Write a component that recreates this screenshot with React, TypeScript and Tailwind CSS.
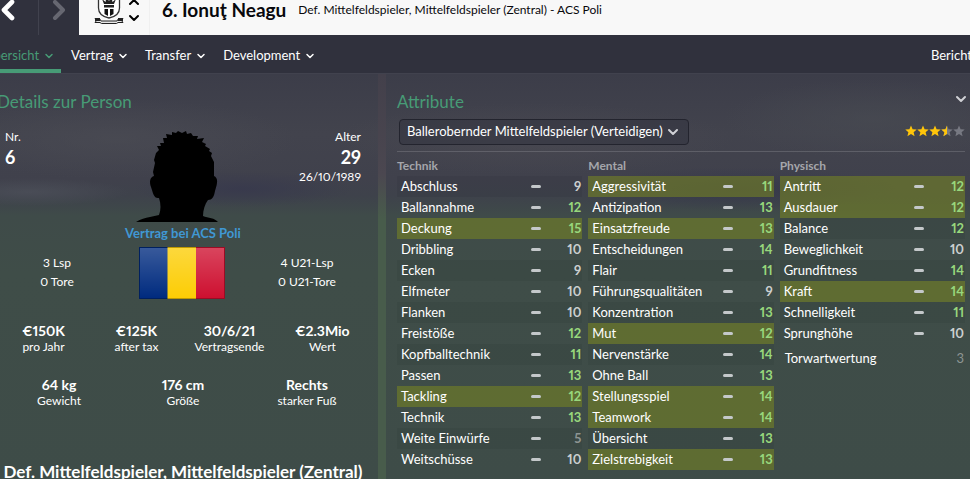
import { ChevronDown, ChevronLeft, ChevronRight, ChevronUp } from 'lucide-react';

interface Attribute {
  name: string;
  value: number;
  key?: boolean;
}

interface AttributeGroup {
  title: string;
  attributes: Attribute[];
}

const groups: AttributeGroup[] = [
  {
    title: 'Technik',
    attributes: [
      { name: 'Abschluss', value: 9 },
      { name: 'Ballannahme', value: 12 },
      { name: 'Deckung', value: 15, key: true },
      { name: 'Dribbling', value: 10 },
      { name: 'Ecken', value: 9 },
      { name: 'Elfmeter', value: 10 },
      { name: 'Flanken', value: 10 },
      { name: 'Freistöße', value: 12 },
      { name: 'Kopfballtechnik', value: 11 },
      { name: 'Passen', value: 13 },
      { name: 'Tackling', value: 12, key: true },
      { name: 'Technik', value: 13 },
      { name: 'Weite Einwürfe', value: 5 },
      { name: 'Weitschüsse', value: 10 },
    ],
  },
  {
    title: 'Mental',
    attributes: [
      { name: 'Aggressivität', value: 11, key: true },
      { name: 'Antizipation', value: 13 },
      { name: 'Einsatzfreude', value: 13, key: true },
      { name: 'Entscheidungen', value: 14 },
      { name: 'Flair', value: 11 },
      { name: 'Führungsqualitäten', value: 9 },
      { name: 'Konzentration', value: 13 },
      { name: 'Mut', value: 12, key: true },
      { name: 'Nervenstärke', value: 14 },
      { name: 'Ohne Ball', value: 13 },
      { name: 'Stellungsspiel', value: 14, key: true },
      { name: 'Teamwork', value: 14, key: true },
      { name: 'Übersicht', value: 13 },
      { name: 'Zielstrebigkeit', value: 13, key: true },
    ],
  },
  {
    title: 'Physisch',
    attributes: [
      { name: 'Antritt', value: 12, key: true },
      { name: 'Ausdauer', value: 12, key: true },
      { name: 'Balance', value: 12 },
      { name: 'Beweglichkeit', value: 10 },
      { name: 'Grundfitness', value: 14 },
      { name: 'Kraft', value: 14, key: true },
      { name: 'Schnelligkeit', value: 11 },
      { name: 'Sprunghöhe', value: 10 },
    ],
  },
];

const contract = [
  { value: '€150K', label: 'pro Jahr' },
  { value: '€125K', label: 'after tax' },
  { value: '30/6/21', label: 'Vertragsende' },
  { value: '€2.3Mio', label: 'Wert' },
];

const body = [
  { value: '64 kg', label: 'Gewicht' },
  { value: '176 cm', label: 'Größe' },
  { value: 'Rechts', label: 'starker Fuß' },
];

const tabs = ['Vertrag', 'Transfer', 'Development'];

function valueColor(value: number) {
  if (value > 10) return 'text-[#98d77c]';
  if (value > 5) return 'text-[#ccd0d0]';
  return 'text-[#8d9593]';
}

function ClubCrest() {
  return (
    <svg width="32" height="40" viewBox="0 0 30 40" fill="none" aria-hidden="true">
      <path d="M4.500 4V24C4.500 30 10 33 15 34C20 33 25.500 30 25.500 24V4Z" fill="#fff" stroke="#333" strokeWidth="1.300" />
      <path d="M8 15L10 20H20L22 15L18.500 18L17.500 13L15 17L12.500 13L11.500 18ZM10 21H20V23.500H10Z" fill="#222" />
      <path d="M10.500 25H14V32L10.500 30ZM16 25H19.500V30L16 32Z" fill="#111" />
      <path d="M1 34.500H5.500L7 37H23L24.500 34.500H29L27.500 36.500L29 38.500H24L22.500 39.500H7.500L6 38.500H1L2.500 36.500Z" fill="#e5e5e5" stroke="#222" />
      <path d="M1 34H6V37H1ZM24 34H29V37H24Z" fill="#222" />
    </svg>
  );
}

function Silhouette() {
  return (
    <svg width="82" height="91" viewBox="0 0 82 91" role="img" aria-label="Ionuţ Neagu">
      <path
        d="M0 91C5 88 9 87 14 86L23 84C25 79 25 73 23 67C18 68 17 62 15 56C13 51 14 46 18 45L17 41L19 32L18 29L20 22L23 19L21 15L25 15L24 12L28 12L27 7L31 7L30 3L36 4L36 1L40 2L42 0L46 2L50 0L51 3L55 2L57 5L62 5L61 8L68 7L66 11L70 13L69 15L74 18L73 20L76 22L75 25L78 31L78 45C82 47 82 51 79 60C78 66 76 69 72 69C69 73 67 79 67 85C72 87 79 87 82 91Z"
        fill="#000"
      />
    </svg>
  );
}

function RomanianFlag() {
  return (
    <svg width="86" height="52" viewBox="0 0 86 52" role="img" aria-label="Rumänien">
      <defs>
        <linearGradient id="gloss" x1="0" y1="0" x2="0" y2="1">
          <stop offset="0" stopColor="#fff" stopOpacity="0.220" />
          <stop offset="1" stopColor="#fff" stopOpacity="0" />
        </linearGradient>
      </defs>
      <path d="M0 0H29V52H0Z" fill="#002b7f" />
      <path d="M28.500 0H57.500V52H28.500Z" fill="#fccd05" />
      <path d="M57 0H86V52H57Z" fill="#ce1030" />
      <path d="M1 1H85V51H1Z" fill="url(#gloss)" />
      <path d="M.5 .5H85.500V51.500H.5Z" fill="none" stroke="#000" strokeOpacity=".25" />
    </svg>
  );
}

function Stars() {
  const star = 'M6 .5L7.600 4.200L11.700 4.500L8.600 7.200L9.600 11.200L6 9L2.400 11.200L3.400 7.200L.3 4.500L4.400 4.200Z';
  return (
    <svg width="60" height="12" viewBox="0 0 60 12" role="img" aria-label="3,5 von 5 Sternen">
      <clipPath id="rating">
        <path d="M0 0H42V12H0Z" />
      </clipPath>
      {[36, 48].map((x) => (
        <path key={x} d={star} transform={`translate(${x} 0)`} fill="#777982" />
      ))}
      <g clipPath="url(#rating)" fill="#ffc50a">
        {[0, 12, 24, 36].map((x) => (
          <path key={x} d={star} transform={`translate(${x} 0)`} />
        ))}
      </g>
    </svg>
  );
}

function Stat({ value, label }: { value: string; label: string }) {
  return (
    <div className="text-center">
      <div className="text-[14px] leading-4 font-bold">{value}</div>
      <div className="text-[12px] leading-4">{label}</div>
    </div>
  );
}

function AttributeTable({ group }: { group: AttributeGroup }) {
  return (
    <table className="w-full table-fixed border-collapse">
      <caption className="h-[21px] text-left text-[12px] leading-[22px] font-bold text-[#a5a6ab]">{group.title}</caption>
      <tbody>
        {group.attributes.map((attribute) => (
          <tr
            key={attribute.name}
            className={`h-[21px] ${attribute.key ? 'bg-[#748225]/60' : 'odd:bg-black/5'}`}
          >
            <th scope="row" className="w-[67%] p-0 pl-1 text-left text-[13px] leading-[21px] font-normal whitespace-nowrap">
              {attribute.name}
            </th>
            <td className="p-0">
              <div className="mx-auto h-[3px] w-2.5 rounded-sm bg-[#c4c8ca]" />
            </td>
            <td className={`p-0 pr-px text-right text-[13px] leading-[21px] font-bold ${valueColor(attribute.value)}`}>
              {attribute.value}
            </td>
          </tr>
        ))}
      </tbody>
    </table>
  );
}

function Header() {
  return (
    <header className="-mt-4 flex h-[51px] shrink-0 bg-[#f8f8f8]">
      <div className="flex w-[79px] shrink-0 bg-[#30313d] text-white">
        <button aria-label="Zurück" className="flex w-[39px] items-center justify-start border-r border-[#41424e]">
          <ChevronLeft className="-ml-2 h-8 w-8" strokeWidth={3.5} />
        </button>
        <button aria-label="Vor" className="flex flex-1 items-center justify-center text-[#666771]">
          <ChevronRight className="h-8 w-8" strokeWidth={3} />
        </button>
      </div>
      <div className="flex w-[71px] shrink-0 items-start border-r border-[#f0f0f0] pl-3.5 text-black">
        <ClubCrest />
        <div className="flex flex-col pt-2.5 pl-px">
          <button aria-label="Vorheriger Spieler">
            <ChevronUp className="h-4 w-4" strokeWidth={3} />
          </button>
          <button aria-label="Nächster Spieler">
            <ChevronDown className="h-4 w-4" strokeWidth={3} />
          </button>
        </div>
      </div>
      <div className="flex items-center gap-3 pt-px pl-3 whitespace-nowrap text-[#08080c]">
        <h1 className="text-[19px] leading-7 font-bold">6. Ionuţ Neagu</h1>
        <p className="text-[12px]">Def. Mittelfeldspieler, Mittelfeldspieler (Zentral) - ACS Poli</p>
      </div>
    </header>
  );
}

function Navigation() {
  return (
    <nav className="flex h-[39px] shrink-0 justify-between border-b border-[#41424e] bg-[#30313d] text-[13px]">
      <div className="flex gap-2.5">
        <button className="-ml-5 flex items-center gap-1 border-b-4 border-[#479b76] pt-2 pr-1.5 pl-1 text-[#479b76]">
          Übersicht
          <ChevronDown className="h-3 w-3" strokeWidth={3} />
        </button>
        <div className="flex gap-4">
          {tabs.map((tab) => (
            <button key={tab} className="flex items-center gap-1 pt-1">
              {tab}
              <ChevronDown className="h-3 w-3" strokeWidth={3} />
            </button>
          ))}
        </div>
      </div>
      <button className="-mr-0.5 pt-1">Bericht</button>
    </nav>
  );
}

function PersonPanel() {
  return (
    <section className="-ml-[3px] min-w-0 pr-2.5">
      <h2 className="h-[49px] pt-2 text-[17px] leading-6 text-[#479b76]">Details zur Person</h2>
      <div className="grid grid-cols-3">
        <div className="pl-2">
          <div className="text-[12px] leading-3">Nr.</div>
          <div className="text-[18px] leading-7 font-bold">6</div>
        </div>
        <div className="flex justify-center pr-3">
          <Silhouette />
        </div>
        <div className="pr-2 text-right">
          <div className="text-[12px] leading-3">Alter</div>
          <div className="text-[18px] leading-7 font-bold">29</div>
          <div className="text-[12px] leading-3">26/10/1989</div>
        </div>
      </div>
      <div className="text-center text-[13px] leading-[23px] font-bold text-[#4098d4]">
        <a href="#vertrag">Vertrag bei ACS Poli</a>
      </div>
      <div className="mt-0.5 grid grid-cols-3 text-center text-[12px] leading-[19px]">
        <div className="pt-1.5 pr-1">
          <div>3 Lsp</div>
          <div>0 Tore</div>
        </div>
        <div className="flex justify-center pr-0.5">
          <RomanianFlag />
        </div>
        <div className="pt-1.5">
          <div>4 U21-Lsp</div>
          <div>0 U21-Tore</div>
        </div>
      </div>
      <div className="mt-6 grid grid-cols-4">
        {contract.map((item) => (
          <Stat key={item.label} value={item.value} label={item.label} />
        ))}
      </div>
      <div className="mt-[22px] grid grid-cols-3">
        {body.map((item) => (
          <Stat key={item.label} value={item.value} label={item.label} />
        ))}
      </div>
      <h3 className="mt-[51px] text-center text-[17px] leading-6 font-bold whitespace-nowrap">
        Def. Mittelfeldspieler, Mittelfeldspieler (Zentral)
      </h3>
    </section>
  );
}

function AttributesPanel() {
  return (
    <section className="min-w-0 pr-[5px] pl-2.5">
      <div className="flex h-9 items-start justify-between pt-2">
        <h2 className="text-[17px] leading-6 text-[#479b76]">Attribute</h2>
        <button aria-label="Attribute einklappen" className="pt-px text-[#d0d1d6]">
          <ChevronDown className="-mr-1 h-4 w-4" strokeWidth={3} />
        </button>
      </div>
      <div className="flex items-center justify-between border-b border-white/15 pb-1.5 pl-0.5">
        <div className="relative w-[290px]">
          <select
            aria-label="Rolle"
            className="h-[26px] w-full appearance-none rounded border border-[#23242e] bg-[#343541]/60 pr-6 pl-[7px] text-[13px]"
          >
            <option>Ballerobernder Mittelfeldspieler (Verteidigen)</option>
          </select>
          <ChevronDown className="pointer-events-none absolute top-1.5 right-2 h-4 w-4 text-[#d0d1d6]" strokeWidth={3} />
        </div>
        <Stars />
      </div>
      <div className="grid grid-cols-3 items-start gap-1.5 pt-[3px]">
        {groups.map((group) => (
          <div key={group.title}>
            <AttributeTable group={group} />
            {group.title === 'Physisch' && (
              <div className="mt-1 flex justify-between pr-px pl-[5px] text-[13px] leading-5">
                <span>Torwartwertung</span>
                <span className="text-[#8d9593]">3</span>
              </div>
            )}
          </div>
        ))}
      </div>
    </section>
  );
}

export default function App() {
  return (
    <div className="flex h-screen flex-col overflow-hidden bg-[#3e4c48] font-['Lato','Open_Sans',sans-serif] text-white proportional-nums">
      <Header />
      <Navigation />
      <main className="relative isolate grid flex-1 grid-cols-[13fr_20fr] gap-2 bg-[linear-gradient(to_bottom,#3c3d49_0px,#42434d_60px,#40414c_105px,#3e424b_122px,#3f4b49_142px,#3f4d48_200px,#3e4c48_100%)] pt-2">
        {/* out-of-focus stand and perimeter boards */}
        <div className="absolute inset-x-0 top-0 -z-10 h-40 bg-[radial-gradient(ellipse_160px_22px_at_76%_115px,#34364acc,transparent),radial-gradient(ellipse_110px_18px_at_25%_115px,#37384dcc,transparent),radial-gradient(ellipse_180px_40px_at_12%_65px,#4b4c54aa,transparent),radial-gradient(ellipse_200px_36px_at_55%_65px,#4b4a52aa,transparent),radial-gradient(ellipse_150px_40px_at_90%_45px,#484b52aa,transparent),radial-gradient(ellipse_100px_14px_at_3%_118px,#4f525caa,transparent)]" />
        <div className="absolute inset-y-0 left-[39%] -z-10 w-2 bg-[linear-gradient(to_bottom,#43404b_0px,#4b4750_100px,#485c4b_145px,#485c4b_100%)]" />
        <PersonPanel />
        <AttributesPanel />
      </main>
    </div>
  );
}
